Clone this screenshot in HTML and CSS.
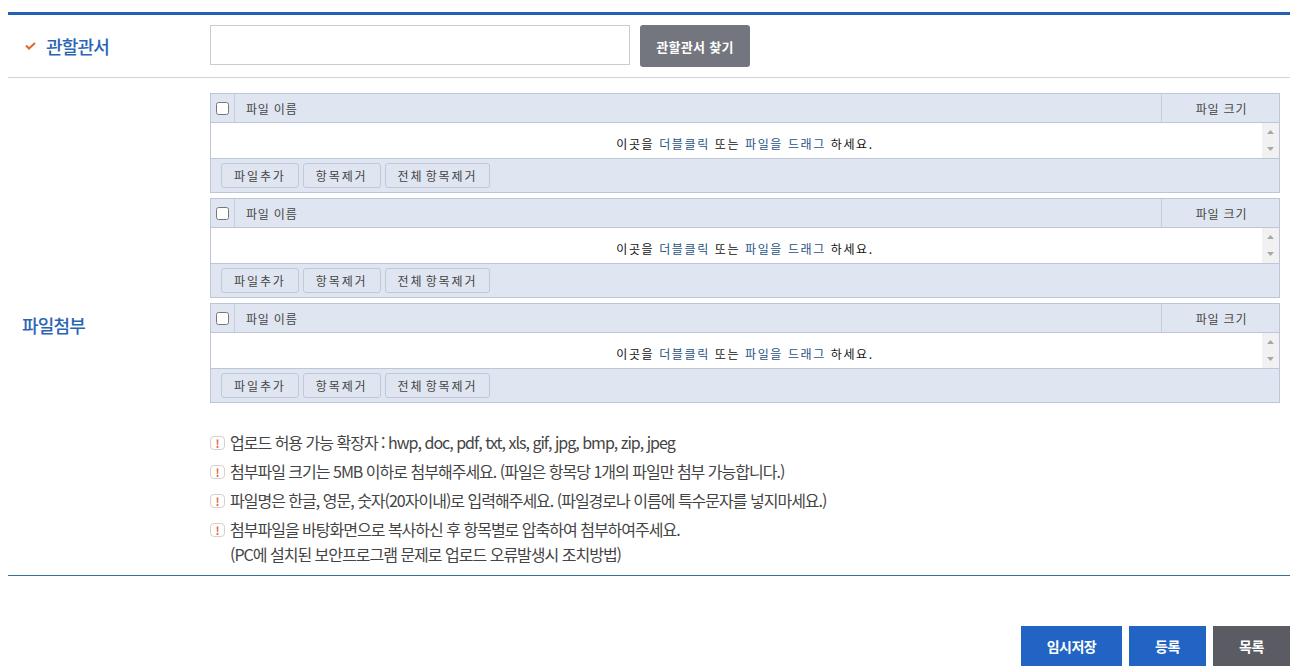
FILE: index.html
```html
<!DOCTYPE html>
<html lang="ko">
<head>
  <meta charset="UTF-8" />
  <title>파일첨부</title>
  <link rel="stylesheet" href="styles.css">
</head>
<body>
  <div class="form-table">
    <div class="form-row office-row">
      <div class="row-label">
        <svg class="check-icon" width="11" height="8" viewBox="0 0 11 8"><path d="M1 3.5 L4 6.5 L10 1" fill="none" stroke="#e0672f" stroke-width="2"/></svg>
        <span>관할관서</span>
      </div>
      <div class="office-field">
        <input type="text" class="office-input" />
        <button class="find-btn">관할관서 찾기</button>
      </div>
    </div>

    <div class="form-row file-row">
      <div class="row-label file-label">파일첨부</div>
      <div class="file-field">
        <div class="uploader">
          <div class="up-head">
            <div class="up-check"><input type="checkbox" /></div>
            <div class="up-name">파일 이름</div>
            <div class="up-size">파일 크기</div>
          </div>
          <div class="up-body">
            <p class="up-hint">이곳을 <b>더블클릭</b> 또는 <b>파일을 드래그</b> 하세요.</p>
            <div class="up-scroll">
              <svg width="7" height="4" viewBox="0 0 7 4"><path d="M3.5 0 L7 4 L0 4 Z" fill="#a8a8a8"/></svg>
              <svg width="7" height="4" viewBox="0 0 7 4"><path d="M0 0 L7 0 L3.5 4 Z" fill="#a8a8a8"/></svg>
            </div>
          </div>
          <div class="up-foot">
            <button class="up-btn">파일추가</button>
            <button class="up-btn">항목제거</button>
            <button class="up-btn">전체 항목제거</button>
          </div>
        </div>

        <div class="uploader">
          <div class="up-head">
            <div class="up-check"><input type="checkbox" /></div>
            <div class="up-name">파일 이름</div>
            <div class="up-size">파일 크기</div>
          </div>
          <div class="up-body">
            <p class="up-hint">이곳을 <b>더블클릭</b> 또는 <b>파일을 드래그</b> 하세요.</p>
            <div class="up-scroll">
              <svg width="7" height="4" viewBox="0 0 7 4"><path d="M3.5 0 L7 4 L0 4 Z" fill="#a8a8a8"/></svg>
              <svg width="7" height="4" viewBox="0 0 7 4"><path d="M0 0 L7 0 L3.5 4 Z" fill="#a8a8a8"/></svg>
            </div>
          </div>
          <div class="up-foot">
            <button class="up-btn">파일추가</button>
            <button class="up-btn">항목제거</button>
            <button class="up-btn">전체 항목제거</button>
          </div>
        </div>

        <div class="uploader">
          <div class="up-head">
            <div class="up-check"><input type="checkbox" /></div>
            <div class="up-name">파일 이름</div>
            <div class="up-size">파일 크기</div>
          </div>
          <div class="up-body">
            <p class="up-hint">이곳을 <b>더블클릭</b> 또는 <b>파일을 드래그</b> 하세요.</p>
            <div class="up-scroll">
              <svg width="7" height="4" viewBox="0 0 7 4"><path d="M3.5 0 L7 4 L0 4 Z" fill="#a8a8a8"/></svg>
              <svg width="7" height="4" viewBox="0 0 7 4"><path d="M0 0 L7 0 L3.5 4 Z" fill="#a8a8a8"/></svg>
            </div>
          </div>
          <div class="up-foot">
            <button class="up-btn">파일추가</button>
            <button class="up-btn">항목제거</button>
            <button class="up-btn">전체 항목제거</button>
          </div>
        </div>

        <ul class="notes">
          <li><i class="warn">!</i><span>업로드 허용 가능 확장자 : hwp, doc, pdf, txt, xls, gif, jpg, bmp, zip, jpeg</span></li>
          <li><i class="warn">!</i><span>첨부파일 크기는 5MB 이하로 첨부해주세요. (파일은 항목당 1개의 파일만 첨부 가능합니다.)</span></li>
          <li><i class="warn">!</i><span>파일명은 한글, 영문, 숫자(20자이내)로 입력해주세요. (파일경로나 이름에 특수문자를 넣지마세요.)</span></li>
          <li><i class="warn">!</i><span>첨부파일을 바탕화면으로 복사하신 후 항목별로 압축하여 첨부하여주세요.<br>(PC에 설치된 보안프로그램 문제로 업로드 오류발생시 조치방법)</span></li>
        </ul>
      </div>
    </div>
  </div>

  <div class="actions">
    <button class="act-btn temp">임시저장</button>
    <button class="act-btn save">등록</button>
    <button class="act-btn list">목록</button>
  </div>
</body>
</html>
```

FILE: styles.css
```css
* {
  box-sizing: border-box;
}

body {
  margin: 0;
  padding: 12px 22px 0 8px;
  background: #fff;
  font-family: "Noto Sans CJK KR", "Noto Sans", sans-serif;
  color: #444;
}

button {
  font-family: inherit;
  cursor: pointer;
}

.form-table {
  border-top: 3px solid #2460b4;
  border-bottom: 1px solid #366f94;
}

.form-row {
  display: flex;
}

.office-row {
  height: 63px;
  border-bottom: 1px solid #d2d2d2;
}

.row-label {
  width: 202px;
  padding-left: 14px;
  display: flex;
  align-items: center;
  gap: 10px;
  font-size: 18px;
  font-weight: 500;
  letter-spacing: -0.8px;
  color: #2a65b4;
}

.check-icon {
  margin-left: 3px;
}

.file-label {
  padding-bottom: 4px;
}

.office-field {
  display: flex;
  gap: 10px;
  padding-top: 10px;
  align-items: flex-start;
}

.office-input {
  width: 420px;
  height: 40px;
  border: 1px solid #ccc;
  background: #fff;
}

.find-btn {
  width: 110px;
  height: 42px;
  border: 0;
  border-radius: 3px;
  background: #73767e;
  color: #fff;
  font-size: 13px;
  font-weight: 700;
  letter-spacing: 0.3px;
}

.file-row {
  height: 497px;
}

.file-field {
  width: 1070px;
  padding-top: 15px;
}

.uploader {
  height: 100px;
  margin-bottom: 5px;
  border: 1px solid #bcc6d6;
  font-size: 12px;
  color: #444;
}

.up-head {
  display: flex;
  height: 29px;
  background: #dfe6f1;
  border-bottom: 1px solid #bcc6d6;
  line-height: 30px;
  letter-spacing: 0.8px;
}

.up-check {
  width: 24px;
  border-right: 1px solid #c6cfdc;
  display: flex;
  align-items: center;
  justify-content: center;
}

.up-check input {
  width: 13px;
  height: 13px;
  margin: 0;
}

.up-name {
  flex: 1;
  padding-left: 11px;
}

.up-size {
  width: 118px;
  padding-left: 2px;
  border-left: 1px solid #c6cfdc;
  text-align: center;
}

.up-body {
  display: flex;
  height: 36px;
  background: #fff;
  border-bottom: 1px solid #bcc6d6;
}

.up-hint {
  flex: 1;
  margin: 0;
  padding-left: 17px;
  text-align: center;
  line-height: 41px;
  color: #111;
  letter-spacing: 1.6px;
}

.up-hint b {
  font-weight: 400;
  color: #1f5384;
}

.up-scroll {
  width: 17px;
  background: #f1f1f1;
  display: flex;
  flex-direction: column;
  align-items: center;
  justify-content: space-between;
  padding: 7px 0;
}

.up-foot {
  display: flex;
  gap: 4px;
  height: 33px;
  padding: 4px 0 0 10px;
  background: #dfe6f1;
}

.up-btn {
  height: 25px;
  padding: 0 12px;
  border: 1px solid #bfc9d7;
  border-radius: 3px;
  background: #dfe6f1;
  color: #444;
  font-size: 12px;
  letter-spacing: 1.9px;
  word-spacing: -3px;
}

.notes {
  list-style: none;
  margin: 0;
  padding: 22px 0 0;
  font-size: 16px;
  letter-spacing: -1px;
  line-height: 25px;
  color: #444;
}

.notes li {
  display: flex;
  gap: 5px;
  margin-bottom: 4px;
}

.warn {
  flex: none;
  width: 15px;
  height: 14px;
  margin-top: 6px;
  border: 1px solid #d8d0cc;
  border-radius: 4px;
  background: #fff;
  color: #e8683a;
  font-size: 11px;
  font-style: normal;
  font-weight: 700;
  line-height: 12px;
  letter-spacing: 0;
  text-align: center;
}

.actions {
  display: flex;
  justify-content: flex-end;
  gap: 7px;
  margin-top: 50px;
}

.act-btn {
  height: 40px;
  border: 0;
  color: #fff;
  font-size: 14px;
  font-weight: 700;
  letter-spacing: -0.5px;
}

.temp {
  width: 101px;
  background: #2164c3;
}

.save {
  width: 77px;
  background: #2164c3;
}

.list {
  width: 77px;
  background: #5a5b63;
}
```
